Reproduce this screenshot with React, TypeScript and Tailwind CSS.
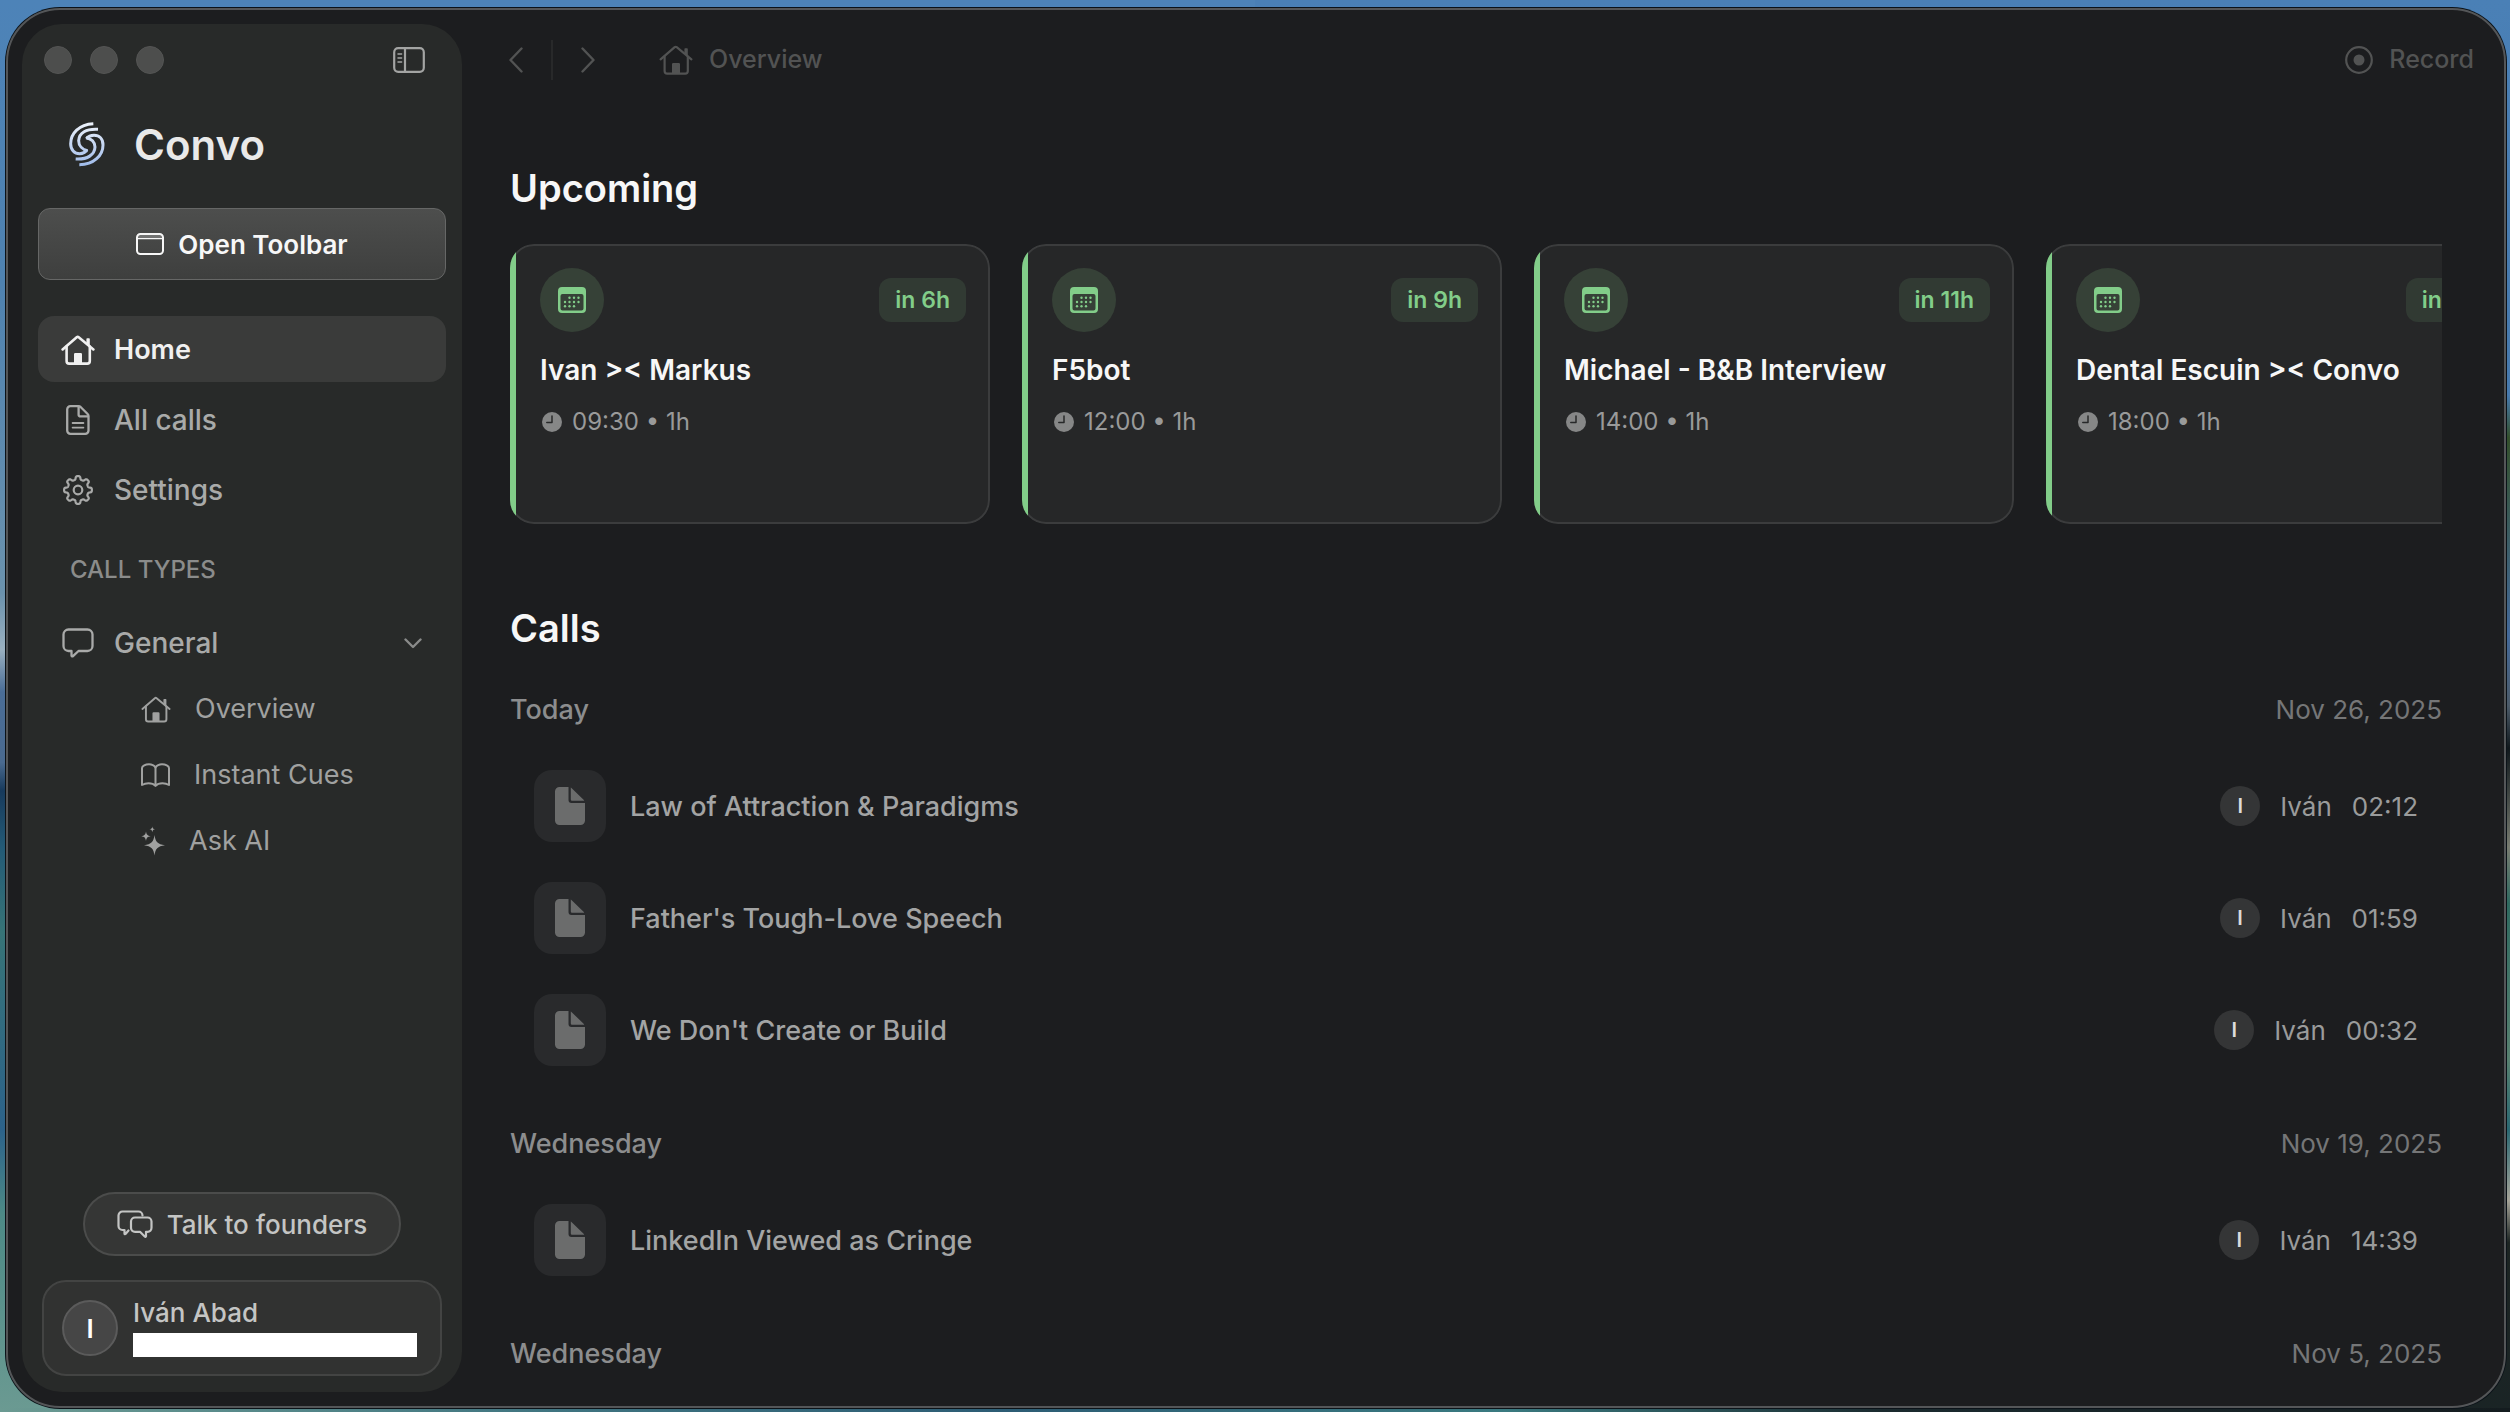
import React from 'react';

interface Meeting {
  title: string;
  time: string;
  duration: string;
  startsIn: string;
}

interface Call {
  title: string;
  speaker: string;
  length: string;
}

interface CallGroup {
  day: string;
  date: string;
  calls: Call[];
}

const meetings: Meeting[] = [
  { title: 'Ivan >< Markus', time: '09:30', duration: '1h', startsIn: 'in 6h' },
  { title: 'F5bot', time: '12:00', duration: '1h', startsIn: 'in 9h' },
  { title: 'Michael - B&B Interview', time: '14:00', duration: '1h', startsIn: 'in 11h' },
  { title: 'Dental Escuin >< Convo', time: '18:00', duration: '1h', startsIn: 'in 15h' },
];

const callGroups: CallGroup[] = [
  {
    day: 'Today',
    date: 'Nov 26, 2025',
    calls: [
      { title: 'Law of Attraction & Paradigms', speaker: 'Iván', length: '02:12' },
      { title: "Father's Tough-Love Speech", speaker: 'Iván', length: '01:59' },
      { title: "We Don't Create or Build", speaker: 'Iván', length: '00:32' },
    ],
  },
  {
    day: 'Wednesday',
    date: 'Nov 19, 2025',
    calls: [{ title: 'LinkedIn Viewed as Cringe', speaker: 'Iván', length: '14:39' }],
  },
  { day: 'Wednesday', date: 'Nov 5, 2025', calls: [] },
];

/* ---------- Icons ---------- */

function ConvoLogo() {
  return (
    <svg width="38" height="46" viewBox="203 363 114 138" fill="none" aria-hidden="true">
      <defs>
        <linearGradient id="convo" x1="0" y1="366" x2="0" y2="498" gradientUnits="userSpaceOnUse">
          <stop offset="0" stopColor="#eef3fb" />
          <stop offset="1" stopColor="#9fbbea" />
        </linearGradient>
      </defs>
      <g stroke="url(#convo)" strokeWidth="9">
        <path d="M279 371C236 373 211 401 211 431C211 449 222 461 238 461C247 461 255 457 260 449" />
        <path d="M293 388C258 386 236 398 235 422C235 438 247 449 262 452" />
        <path d="M237 494C281 494 308 466 308 435C308 416 297 406 281 406C271 406 263 410 258 416" />
        <path d="M226 477C262 479 283 464 284 441C284 427 273 415 257 413" />
      </g>
    </svg>
  );
}

function HouseIcon({ className, stroke = 2.6 }: { className?: string; stroke?: number }) {
  return (
    <svg className={className} viewBox="0 0 34 30" fill="none" stroke="currentColor" strokeWidth={stroke} strokeLinecap="round" strokeLinejoin="round" aria-hidden="true">
      <path d="M1.6 14.4 15.7 2.2a1.6 1.6 0 0 1 2 0L32.4 14.4" />
      <path d="M5.6 11.5V26a2.6 2.6 0 0 0 2.6 2.6h18A2.6 2.6 0 0 0 28.8 26V11.5" />
      <path d="M26.2 4h1.8v6l-1.8-1.6z" fill="currentColor" strokeWidth="1.6" />
      <path d="M13 29V19.2a1.2 1.2 0 0 1 1.2-1.2h5.6a1.2 1.2 0 0 1 1.2 1.2V29z" fill="currentColor" stroke="none" />
    </svg>
  );
}

function DocIcon() {
  return (
    <svg width="24" height="30" viewBox="0 0 24 30" fill="none" stroke="currentColor" strokeWidth="2.3" strokeLinecap="round" strokeLinejoin="round" aria-hidden="true">
      <path d="M4.4 1.2h8.2c.8 0 1.4.3 2 .8l7 7c.6.6.9 1.2.9 2v14.6a3.2 3.2 0 0 1-3.2 3.2H4.4a3.2 3.2 0 0 1-3.2-3.2V4.4a3.2 3.2 0 0 1 3.2-3.2Z" />
      <path d="M12.6 1.6v7.8a2 2 0 0 0 2 2H22" />
      <path d="M6.6 18h10.8M6.6 22.6h10.8" strokeWidth="1.8" />
    </svg>
  );
}

// Closed outline with eight soft teeth, centred on 15,15
const gearOutline = Array.from({ length: 160 }, (_, i) => {
  const angle = (i / 160) * Math.PI * 2;
  const r = 12.2 + 1.7 * Math.tanh(2.4 * Math.cos(8 * angle));
  return `${i ? 'L' : 'M'}${(15 + r * Math.cos(angle)).toFixed(2)} ${(15 + r * Math.sin(angle)).toFixed(2)}`;
}).join('') + 'Z';

function GearIcon() {
  return (
    <svg width="30" height="30" viewBox="0 0 30 30" fill="none" stroke="currentColor" strokeWidth="2.2" strokeLinejoin="round" aria-hidden="true">
      <path d={gearOutline} />
      <circle cx="15" cy="15" r="4.3" />
    </svg>
  );
}

function BubbleIcon() {
  return (
    <svg width="32" height="30" viewBox="0 0 32 30" fill="none" stroke="currentColor" strokeWidth="2.3" strokeLinejoin="round" aria-hidden="true">
      <path d="M6.5 1.5h19a5 5 0 0 1 5 5V18a5 5 0 0 1-5 5h-9L11 28.2a.9.9 0 0 1-1.5-.6V23h-3a5 5 0 0 1-5-5V6.5a5 5 0 0 1 5-5Z" />
    </svg>
  );
}

function BubblesIcon() {
  return (
    <svg width="36" height="28" viewBox="0 0 36 28" fill="none" stroke="currentColor" strokeWidth="2.2" strokeLinejoin="round" strokeLinecap="round" aria-hidden="true">
      <path d="M11.5 20.5 8.5 24a.6.6 0 0 1-1-.4V20h-2a4 4 0 0 1-4-4V5.5a4 4 0 0 1 4-4h16a4 4 0 0 1 4 4" />
      <path d="M18 7.5h12.5a4 4 0 0 1 4 4v6.3a4 4 0 0 1-4 4H29v4.4a.6.6 0 0 1-1 .5l-5-4.9h-5a4 4 0 0 1-4-4v-6.3a4 4 0 0 1 4-4Z" />
    </svg>
  );
}

function ToolbarIcon() {
  return (
    <svg width="28" height="22" viewBox="0 0 28 22" fill="none" stroke="currentColor" strokeWidth="2" aria-hidden="true">
      <rect x="1" y="1" width="26" height="20" rx="3.5" />
      <path d="M1 5.5h26" strokeWidth="1.4" />
      <path d="M1 3h26" strokeWidth="1.2" opacity=".5" />
    </svg>
  );
}

function SidebarIcon() {
  return (
    <svg width="32" height="26" viewBox="0 0 32 26" fill="none" stroke="currentColor" strokeWidth="2.2" strokeLinecap="round" aria-hidden="true">
      <rect x="1.2" y="1.2" width="29.6" height="23.6" rx="4" />
      <path d="M12 1.5v23" strokeLinecap="butt" />
      <path d="M5 7h3.6M5 11h3.6M5 15h3.6" strokeWidth="1.5" />
    </svg>
  );
}

function BookIcon() {
  return (
    <svg width="29" height="24" viewBox="0 0 29 24" fill="none" stroke="currentColor" strokeWidth="2" strokeLinecap="round" strokeLinejoin="round" aria-hidden="true">
      <path d="M14.5 4.5C13 2.2 10.5 1.2 8 1.2 4.5 1.2 1 2.8 1 5v17c1.5-.9 3.8-1.7 6.5-1.7 3 0 5.5.9 7 2.5 1.5-1.6 4-2.5 7-2.5 2.7 0 5 .8 6.5 1.7V5c0-2.2-3.5-3.8-7-3.8-2.5 0-5 1-6.5 3.3Z" />
      <path d="M14.5 4.5v18" />
    </svg>
  );
}

function SparklesIcon() {
  return (
    <svg width="24" height="30" viewBox="0 0 24 30" fill="currentColor" aria-hidden="true">
      <path d="M13.5 9c.9 6.6 3 9.3 10.5 10.2-7.5.9-9.6 3.6-10.5 10.3-.9-6.7-3-9.4-10.5-10.3 7.5-.9 9.6-3.6 10.5-10.2Z" />
      <path d="M5 5.5c.5 3.2 1.5 4.2 4.7 4.7-3.2.5-4.2 1.5-4.7 4.7-.5-3.2-1.5-4.2-4.7-4.7C3.5 9.7 4.5 8.7 5 5.5Z" />
      <path d="M11.3.4c.3 2 .9 2.6 2.8 2.9-1.9.3-2.5.9-2.8 2.9-.3-2-.9-2.6-2.8-2.9 1.9-.3 2.5-.9 2.8-2.9Z" />
    </svg>
  );
}

function Chevron({ width, height, d, className }: { width: number; height: number; d: string; className?: string }) {
  return (
    <svg width={width} height={height} viewBox={`0 0 ${width} ${height}`} className={className} fill="none" stroke="currentColor" strokeWidth="2.4" strokeLinecap="round" strokeLinejoin="round" aria-hidden="true">
      <path d={d} />
    </svg>
  );
}

function RecordIcon() {
  return (
    <svg width="28" height="28" viewBox="0 0 28 28" fill="none" aria-hidden="true">
      <circle cx="14" cy="14" r="12.8" stroke="currentColor" strokeWidth="2.2" />
      <circle cx="14" cy="14" r="5.5" fill="currentColor" />
    </svg>
  );
}

const calendarDots = [
  [11.5, 10.7], [16, 10.7], [20.5, 10.7],
  [7, 15], [11.5, 15], [16, 15], [20.5, 15],
  [7, 19.3], [11.5, 19.3], [16, 19.3],
];

function CalendarIcon() {
  return (
    <svg width="28" height="26" viewBox="0 0 28 26" fill="currentColor" aria-hidden="true">
      <path fillRule="evenodd" d="M4 0h20a4 4 0 0 1 4 4v18a4 4 0 0 1-4 4H4a4 4 0 0 1-4-4V4a4 4 0 0 1 4-4Zm.5 7a2 2 0 0 0-2 2v12.5a2 2 0 0 0 2 2h19a2 2 0 0 0 2-2V9a2 2 0 0 0-2-2Z" />
      {calendarDots.map(([x, y]) => (
        <circle key={`${x}-${y}`} cx={x} cy={y} r="1.2" />
      ))}
    </svg>
  );
}

function ClockIcon() {
  return (
    <svg width="20" height="20" viewBox="0 0 20 20" fill="none" aria-hidden="true">
      <circle cx="10" cy="10" r="10" fill="#868787" />
      <path d="M10 4v6.5H4.8" stroke="#272829" strokeWidth="1.5" strokeLinecap="round" strokeLinejoin="round" />
    </svg>
  );
}

function FileFillIcon() {
  return (
    <svg width="30" height="38" viewBox="0 0 30 38" fill="#6b6c6c" aria-hidden="true">
      <path d="M4.5 0h9v13a3 3 0 0 0 3 3H30v17.5a4.5 4.5 0 0 1-4.5 4.5h-21A4.5 4.5 0 0 1 0 33.5v-29A4.5 4.5 0 0 1 4.5 0Z" />
      <path d="M15.8.6c.3.1.6.3.9.6l11.9 11.6c.3.3.5.6.6.9H17a1.2 1.2 0 0 1-1.2-1.2Z" />
    </svg>
  );
}

/* ---------- Sidebar ---------- */

function NavItem({ icon, label, active = false }: { icon: React.ReactNode; label: string; active?: boolean }) {
  return (
    <a
      href="#"
      aria-current={active ? 'page' : undefined}
      className={`flex h-[66px] items-center rounded-2xl pt-0.5 pl-5 ${
        active ? 'bg-[#3a3b3a] text-[27px] font-semibold text-[#f0f0f0]' : 'text-[28px] font-medium text-[#a9aaa9]'
      }`}
    >
      <span className="mr-4 flex w-10 justify-center">{icon}</span>
      {label}
    </a>
  );
}

function SubItem({ icon, label }: { icon: React.ReactNode; label: string }) {
  return (
    <a href="#" className="flex h-[66px] items-center gap-6 pl-[103px] text-[27px] text-[#a0a1a0]">
      {icon}
      {label}
    </a>
  );
}

function Sidebar() {
  return (
    <aside className="flex w-[440px] shrink-0 flex-col rounded-[40px] bg-[#282a29] px-4 pb-4">
      <div className="flex h-[72px] items-center justify-between pr-[21px] pl-1.5">
        <div className="flex gap-[18px]">
          <button aria-label="Close" className="size-7 rounded-full border border-[#545554] bg-[#4d4e4d]" />
          <button aria-label="Minimize" className="size-7 rounded-full border border-[#545554] bg-[#4d4e4d]" />
          <button aria-label="Zoom" className="size-7 rounded-full border border-[#545554] bg-[#4d4e4d]" />
        </div>
        <button aria-label="Toggle sidebar" className="text-[#a3a4a3]">
          <SidebarIcon />
        </button>
      </div>

      <div className="flex h-24 items-center gap-7 pl-[30px]">
        <ConvoLogo />
        <span className="text-[42px] font-semibold text-[#e9e9e9]">Convo</span>
      </div>

      <button className="mt-4 flex h-[72px] items-center justify-center gap-3.5 rounded-xl border border-[#666766] bg-linear-to-b from-[#4d4e4d] to-[#3e3f3e] text-[26px] font-semibold text-[#f7f7f7]">
        <ToolbarIcon />
        Open Toolbar
      </button>

      <nav className="mt-9 flex flex-col gap-1">
        <NavItem active icon={<HouseIcon className="h-[30px] w-[34px]" />} label="Home" />
        <NavItem icon={<DocIcon />} label="All calls" />
        <NavItem icon={<GearIcon />} label="Settings" />
      </nav>

      <h2 className="mt-8 pl-8 text-2xl font-medium text-[#8b8c8b]">CALL TYPES</h2>
      <div className="mt-6">
        <button className="flex h-[66px] w-full items-center pr-6 pl-5 text-[28px] font-medium text-[#a9aaa9]">
          <span className="mr-4 flex w-10 justify-center">
            <BubbleIcon />
          </span>
          General
          <Chevron width={18} height={11} d="M1.5 1.5 9 9l7.5-7.5" className="ml-auto text-[#8a8b8a]" />
        </button>
        <SubItem icon={<HouseIcon className="h-[27px] w-[30px]" stroke={2.2} />} label="Overview" />
        <SubItem icon={<BookIcon />} label="Instant Cues" />
        <SubItem icon={<SparklesIcon />} label="Ask AI" />
      </div>

      <button className="mx-auto mt-auto flex h-16 items-center gap-3.5 rounded-full border-2 border-[#4b4c4b] bg-[#353635] px-8 text-[26px] font-medium text-[#c4c5c4]">
        <BubblesIcon />
        Talk to founders
      </button>

      <div className="mx-1 mt-6 flex h-24 items-center gap-[15px] rounded-3xl border-2 border-[#434443] bg-[#313231] pr-[23px] pl-[18px]">
        <div className="flex size-14 shrink-0 items-center justify-center rounded-full border-2 border-[#5b5b5b] bg-[#464646] text-[26px] font-semibold text-white">
          I
        </div>
        <div className="flex-1 pb-0.5">
          <div className="text-[26px] leading-8 font-medium text-[#c4c5c4]">Iván Abad</div>
          <div className="mt-1 h-6 bg-white" />
        </div>
      </div>
    </aside>
  );
}

/* ---------- Main ---------- */

function TopBar() {
  return (
    <header className="flex h-[72px] shrink-0 items-center pl-[47px] text-[25px] font-medium text-[#525353]">
      <button aria-label="Back">
        <Chevron width={14} height={26} d="M12.5 1.5 1.5 13l11 11.5" />
      </button>
      <div className="mx-7 h-10 w-0.5 bg-[#28292a]" />
      <button aria-label="Forward">
        <Chevron width={14} height={26} d="M1.5 1.5 12.5 13l-11 11.5" />
      </button>
      <div className="ml-16 flex items-center gap-4">
        <HouseIcon className="h-[30px] w-[34px]" stroke={2.2} />
        Overview
      </div>
      <button className="mr-4 ml-auto flex items-center gap-4">
        <RecordIcon />
        Record
      </button>
    </header>
  );
}

function MeetingCard({ meeting }: { meeting: Meeting }) {
  return (
    <article className="relative h-[280px] w-[480px] shrink-0 overflow-hidden rounded-3xl bg-[#262728]">
      <div className="absolute inset-0 rounded-3xl border-2 border-[#3b3c3d]" />
      <div className="absolute inset-y-0 left-0 w-1.5 bg-[#82cd89]" />
      <div className="px-[30px] pt-6">
        <div className="-mr-1.5 flex items-center justify-between">
          <div className="flex size-16 items-center justify-center rounded-full bg-[#364137] text-[#82cd89]">
            <CalendarIcon />
          </div>
          <span className="flex h-11 items-center rounded-xl bg-[#313a33] px-4 text-[23px] font-semibold text-[#82cd89]">
            {meeting.startsIn}
          </span>
        </div>
        <h3 className="mt-5 text-[28px] leading-9 font-semibold text-[#f7f7f7]">{meeting.title}</h3>
        <p className="mt-[18px] flex items-center gap-2.5 pl-0.5 text-2xl leading-8 text-[#999a9a]">
          <ClockIcon />
          {meeting.time} • {meeting.duration}
        </p>
      </div>
    </article>
  );
}

function CallRow({ call }: { call: Call }) {
  return (
    <li className="flex h-28 items-center px-6 text-[26px] text-[#9a9b9b]">
      <div className="mr-6 flex size-[72px] items-center justify-center rounded-[18px] bg-[#292a2c]">
        <FileFillIcon />
      </div>
      <a href="#" className="pt-0.5 text-[27px] font-medium text-[#a3a4a4]">
        {call.title}
      </a>
      <span className="mr-5 ml-auto flex size-10 items-center justify-center rounded-full bg-[#343536] text-xl font-semibold text-[#dcdcdc]">
        {call.speaker[0]}
      </span>
      <span className="mr-5">{call.speaker}</span>
      <span>{call.length}</span>
    </li>
  );
}

export default function App() {
  return (
    <div className="h-screen overflow-hidden pt-2 pr-1 pb-1 pl-1.5 font-['Inter',sans-serif] [background:linear-gradient(to_right,#6b9a92,#3f7480_22%,#2c5c74_40%,#3a7a80_60%,#1a2a2e_75%,#141c1f)_bottom/100%_4px_no-repeat,linear-gradient(#4d83b8,#4f82b0_20%,#6b92ad_42%,#9ab0c0_46%,#4a6d97_49%,#4a6a8f_54%,#173a5c_56%,#235a76_60%,#377477_66%,#2c628a_80%,#4d8a86_86%,#6b9a92)_left/50%_100%_no-repeat,linear-gradient(#4a80b6,#4679ad_28%,#34502c_31%,#43699a_45%,#4b5a68_50%,#10181c_53%,#777b70_60%,#2f6a60_64%,#57806f_75%,#2a6872_80%,#a5a398_85%,#1c2422_88%,#1a2425)_right/50%_100%_no-repeat]">
      <div className="flex h-full overflow-hidden rounded-[54px] border-2 border-[#545658] bg-[#1c1d1f] p-3.5 shadow-[0_0_0_1px_#0b1218]">
        <Sidebar />
        <div className="flex min-w-0 flex-1 flex-col">
          <TopBar />
          <main className="pt-[68px] pr-12 pl-12">
            <h1 className="text-[38px] leading-[48px] font-semibold text-[#f7f7f7]">Upcoming</h1>
            <div className="mt-8 flex gap-8 overflow-hidden">
              {meetings.map((meeting) => (
                <MeetingCard key={meeting.title} meeting={meeting} />
              ))}
            </div>

            <h1 className="mt-20 text-[38px] leading-[48px] font-semibold text-[#f7f7f7]">Calls</h1>
            {callGroups.map((group) => (
              <section key={group.date} className="mt-[42px]">
                <div className="flex items-center justify-between leading-8">
                  <h2 className="text-[27px] font-medium text-[#8c8d8e]">{group.day}</h2>
                  <time className="text-[26px] text-[#757677]">{group.date}</time>
                </div>
                <ul className="mt-6">
                  {group.calls.map((call) => (
                    <CallRow key={call.title} call={call} />
                  ))}
                </ul>
              </section>
            ))}
          </main>
        </div>
      </div>
    </div>
  );
}
